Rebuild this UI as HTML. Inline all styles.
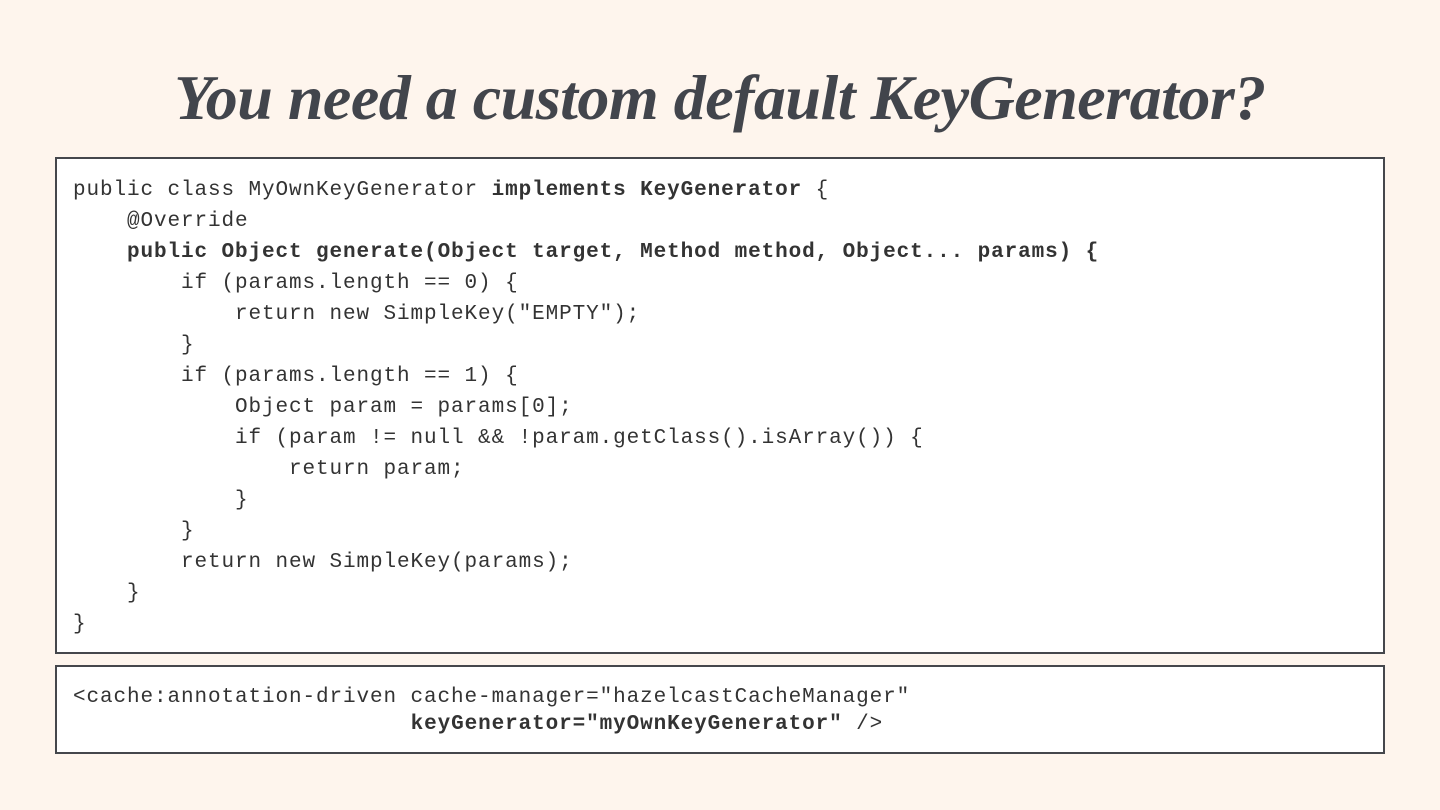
<!DOCTYPE html>
<html><head><meta charset="utf-8"><style>
html,body{margin:0;padding:0}
body{width:1440px;height:810px;background:#fef5ed;position:relative;overflow:hidden}
h1{position:absolute;left:0;top:60px;width:1440px;margin:0;text-align:center;font-family:"Liberation Serif",serif;font-style:italic;font-weight:bold;font-size:64px;line-height:76px;color:#42454c;letter-spacing:-0.5px}
.box{position:absolute;left:55px;width:1310px;background:#fff;border:2px solid #45474c;font-family:"Liberation Mono",monospace;font-size:21px;letter-spacing:0.9px;color:#333;white-space:pre;padding-left:16px;box-sizing:content-box}
.b1{top:157px;height:465px;padding-top:16px;padding-bottom:12px;line-height:31px}
.b2{top:665px;height:56px;padding-top:17px;padding-bottom:12px;line-height:27px}
b{font-weight:bold}
</style></head><body>
<h1>You need a custom default KeyGenerator?</h1>
<div class="box b1">public class MyOwnKeyGenerator <b>implements KeyGenerator</b> {
    @Override
    <b>public Object generate(Object target, Method method, Object... params) {</b>
        if (params.length == 0) {
            return new SimpleKey("EMPTY");
        }
        if (params.length == 1) {
            Object param = params[0];
            if (param != null &amp;&amp; !param.getClass().isArray()) {
                return param;
            }
        }
        return new SimpleKey(params);
    }
}</div>
<div class="box b2">&lt;cache:annotation-driven cache-manager="hazelcastCacheManager"
                         <b>keyGenerator="myOwnKeyGenerator"</b> /&gt;</div>
</body></html>
